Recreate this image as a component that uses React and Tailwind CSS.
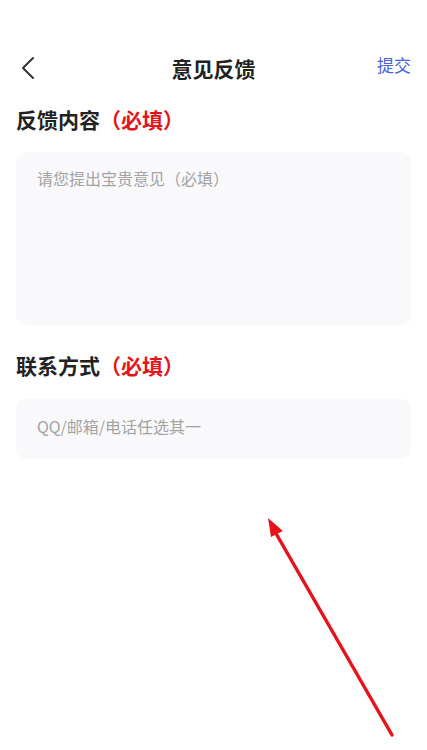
import React from 'react'

const font = { fontFamily: '"Noto Sans CJK SC", "Noto Sans", sans-serif' }

function Label({ children }) {
    return (
        <div className="text-[21px] leading-[28px] font-bold text-[#222]">
            {children}<span className="text-[#e3141b]">（必填）</span>
        </div>
    )
}

export default function App() {
    return (
        <div className="relative w-[427px] h-[750px] bg-white overflow-hidden" style={font}>
            {/* header */}
            <div className="relative h-[40px] mt-[48px] flex items-center justify-center">
                <svg className="absolute left-[18px] top-[8px]" width="20" height="24" viewBox="0 0 20 24" fill="none">
                    <path d="M15 2 L5 12 L15 22" stroke="#333" strokeWidth="2" strokeLinecap="round" strokeLinejoin="round" />
                </svg>
                <div className="text-[21px] font-bold text-[#222] leading-[28px]">意见反馈</div>
                <div className="absolute right-[16px] top-[5px] text-[17px] leading-[24px] text-[#4a63d6]">提交</div>
            </div>

            <div className="px-[16px]">
                <div className="mt-[17px]"><Label>反馈内容</Label></div>
                <div className="mt-[19px] h-[173px] rounded-[10px] bg-[#f9f9fb] pl-[21px] pt-[14px]">
                    <div className="text-[16px] leading-[24px] text-[#a3a3a3]">请您提出宝贵意见（必填）</div>
                </div>

                <div className="mt-[26px]"><Label>联系方式</Label></div>
                <div className="mt-[20px] h-[60px] rounded-[10px] bg-[#f9f9fb] pl-[21px] flex items-center">
                    <div className="text-[16px] leading-[24px] text-[#a3a3a3] -mt-[6px]">QQ/邮箱/电话任选其一</div>
                </div>
            </div>

            {/* red annotation arrow */}
            <svg className="absolute left-0 top-0 pointer-events-none" width="427" height="750" viewBox="0 0 427 750">
                <line x1="392" y1="735" x2="274" y2="530" stroke="#e5141c" strokeWidth="3.5" strokeLinecap="round" />
                <polygon points="268,518 283,531 271,537" fill="#e5141c" />
            </svg>
        </div>
    )
}
